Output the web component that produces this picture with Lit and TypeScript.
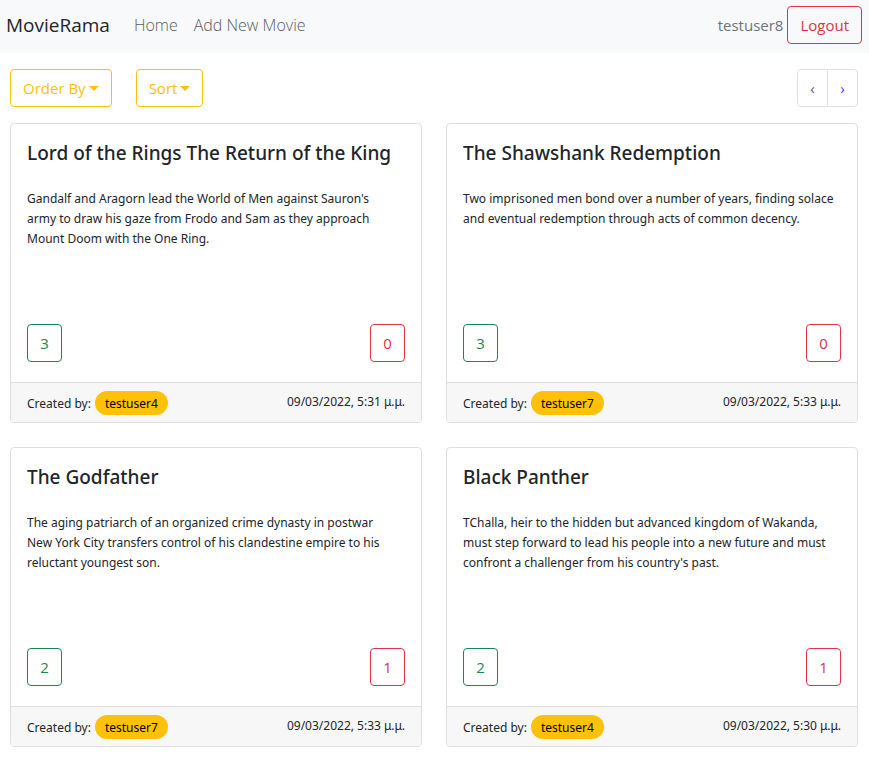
import { LitElement, html, css } from "lit";
import { customElement, property } from "lit/decorators.js";

interface Movie {
  title: string;
  plot: string;
  likes: number;
  hates: number;
  author: string;
  created: string;
}

const movies: Movie[] = [
  {
    title: "Lord of the Rings The Return of the King",
    plot: "Gandalf and Aragorn lead the World of Men against Sauron's army to draw his gaze from Frodo and Sam as they approach Mount Doom with the One Ring.",
    likes: 3,
    hates: 0,
    author: "testuser4",
    created: "09/03/2022, 5:31 μ.μ.",
  },
  {
    title: "The Shawshank Redemption",
    plot: "Two imprisoned men bond over a number of years, finding solace and eventual redemption through acts of common decency.",
    likes: 3,
    hates: 0,
    author: "testuser7",
    created: "09/03/2022, 5:33 μ.μ.",
  },
  {
    title: "The Godfather",
    plot: "The aging patriarch of an organized crime dynasty in postwar New York City transfers control of his clandestine empire to his reluctant youngest son.",
    likes: 2,
    hates: 1,
    author: "testuser7",
    created: "09/03/2022, 5:33 μ.μ.",
  },
  {
    title: "Black Panther",
    plot: "TChalla, heir to the hidden but advanced kingdom of Wakanda, must step forward to lead his people into a new future and must confront a challenger from his country's past.",
    likes: 2,
    hates: 1,
    author: "testuser4",
    created: "09/03/2022, 5:30 μ.μ.",
  },
];

const buttonStyles = css`
  .btn {
    box-sizing: border-box;
    height: 38px;
    padding: 0 12px;
    border: 1px solid currentColor;
    border-radius: 4px;
    background: transparent;
    font: inherit;
    line-height: 24px;
    cursor: pointer;
  }
  .danger {
    color: #dc3545;
  }
  .success {
    color: #198754;
  }
  .warning {
    color: #ffc107;
  }
`;

@customElement("movie-card")
export class MovieCard extends LitElement {
  @property({ attribute: false }) movie!: Movie;

  static styles = [
    buttonStyles,
    css`
      :host {
        display: flex;
      }
      .card {
        box-sizing: border-box;
        flex: 1;
        min-width: 0;
        min-height: 300px;
        display: flex;
        flex-direction: column;
        border: 1px solid #dfdfdf;
        border-radius: 4px;
        overflow: hidden;
        background: #fff;
      }
      .body {
        flex: 1;
        display: flex;
        flex-direction: column;
        padding: 17px 16px 20px;
      }
      .title {
        margin: 0 0 24px;
        font-family: "Noto Sans", sans-serif;
        font-size: 19px;
        font-weight: 500;
        line-height: 24px;
      }
      .plot {
        margin: 0 0 16px;
        padding-right: 6px;
        font-family: "Noto Sans", sans-serif;
        font-size: 12px;
        line-height: 20px;
      }
      .votes {
        margin-top: auto;
        display: flex;
        justify-content: space-between;
      }
      .vote {
        width: 35px;
        padding: 0;
      }
      .footer {
        display: flex;
        justify-content: space-between;
        align-items: flex-start;
        padding: 8px 16px 7px;
        border-top: 1px solid #dfdfdf;
        background: #f7f7f7;
        font-family: "Noto Sans", sans-serif;
        font-size: 12px;
        line-height: 20px;
      }
      .author {
        display: flex;
        align-items: baseline;
        gap: 4px;
      }
      .badge {
        padding: 3px 10px 1px;
        border-radius: 12px;
        background: #ffc107;
        color: #000;
        text-decoration: none;
      }
      .created {
        padding-top: 1px;
      }
    `,
  ];

  render() {
    const m = this.movie;
    return html`
      <article class="card">
        <div class="body">
          <h2 class="title">${m.title}</h2>
          <p class="plot">${m.plot}</p>
          <div class="votes">
            <button class="btn vote success" aria-label="Likes: ${m.likes}">${m.likes}</button>
            <button class="btn vote danger" aria-label="Hates: ${m.hates}">${m.hates}</button>
          </div>
        </div>
        <footer class="footer">
          <div class="author">
            <span>Created by:</span>
            <a class="badge" href="#${m.author}">${m.author}</a>
          </div>
          <time class="created">${m.created}</time>
        </footer>
      </article>
    `;
  }
}

@customElement("app-root")
export class AppRoot extends LitElement {
  static styles = [
    buttonStyles,
    css`
      :host {
        display: block;
        background: #fff;
        color: #212529;
        font-family: "Open Sans", "Noto Sans", sans-serif;
        font-size: 15px;
        line-height: 24px;
      }
      a {
        color: inherit;
        text-decoration: none;
      }
      .navbar {
        display: flex;
        align-items: center;
        padding: 6px 7px 9px 6px;
        background: #f8f9fa;
      }
      .brand {
        margin-right: 24px;
        font-size: 19px;
      }
      .links {
        flex: 1;
        display: flex;
        gap: 16px;
        font-size: 16px;
        font-weight: 300;
        color: #5b5c5d;
      }
      .user {
        margin-right: 4px;
        color: #6c757d;
      }
      .content {
        padding: 16px 11px 24px 10px;
      }
      .toolbar {
        display: flex;
        gap: 24px;
        margin-bottom: 16px;
      }
      .toggle {
        display: flex;
        align-items: center;
        gap: 3px;
      }
      .caret {
        border: 5px solid transparent;
        border-top-color: currentColor;
        border-bottom: 0;
      }
      .pager {
        display: flex;
        margin-left: auto;
        box-sizing: border-box;
        height: 38px;
        border: 1px solid #dee2e6;
        border-radius: 4px;
      }
      .page {
        box-sizing: border-box;
        width: 30px;
        padding: 0;
        border: 0;
        background: transparent;
        font: inherit;
        color: #4a3fff;
        cursor: pointer;
      }
      .previous {
        width: 29px;
        color: #4d5f78;
      }
      .page + .page {
        border-left: 1px solid #dee2e6;
      }
      .grid {
        display: grid;
        grid-template-columns: repeat(auto-fit, minmax(320px, 1fr));
        gap: 24px;
      }
    `,
  ];

  render() {
    return html`
      <nav class="navbar">
        <a class="brand" href="#">MovieRama</a>
        <div class="links">
          <a href="#home">Home</a>
          <a href="#new">Add New Movie</a>
        </div>
        <span class="user">testuser8</span>
        <button class="btn danger">Logout</button>
      </nav>
      <main class="content">
        <div class="toolbar">
          <button class="btn warning toggle" aria-haspopup="true">Order By<span class="caret"></span></button>
          <button class="btn warning toggle" aria-haspopup="true">Sort<span class="caret"></span></button>
          <div class="pager">
            <button class="page previous" aria-label="Previous page">‹</button>
            <button class="page" aria-label="Next page">›</button>
          </div>
        </div>
        <div class="grid">
          ${movies.map((m) => html`<movie-card .movie=${m}></movie-card>`)}
        </div>
      </main>
    `;
  }
}
